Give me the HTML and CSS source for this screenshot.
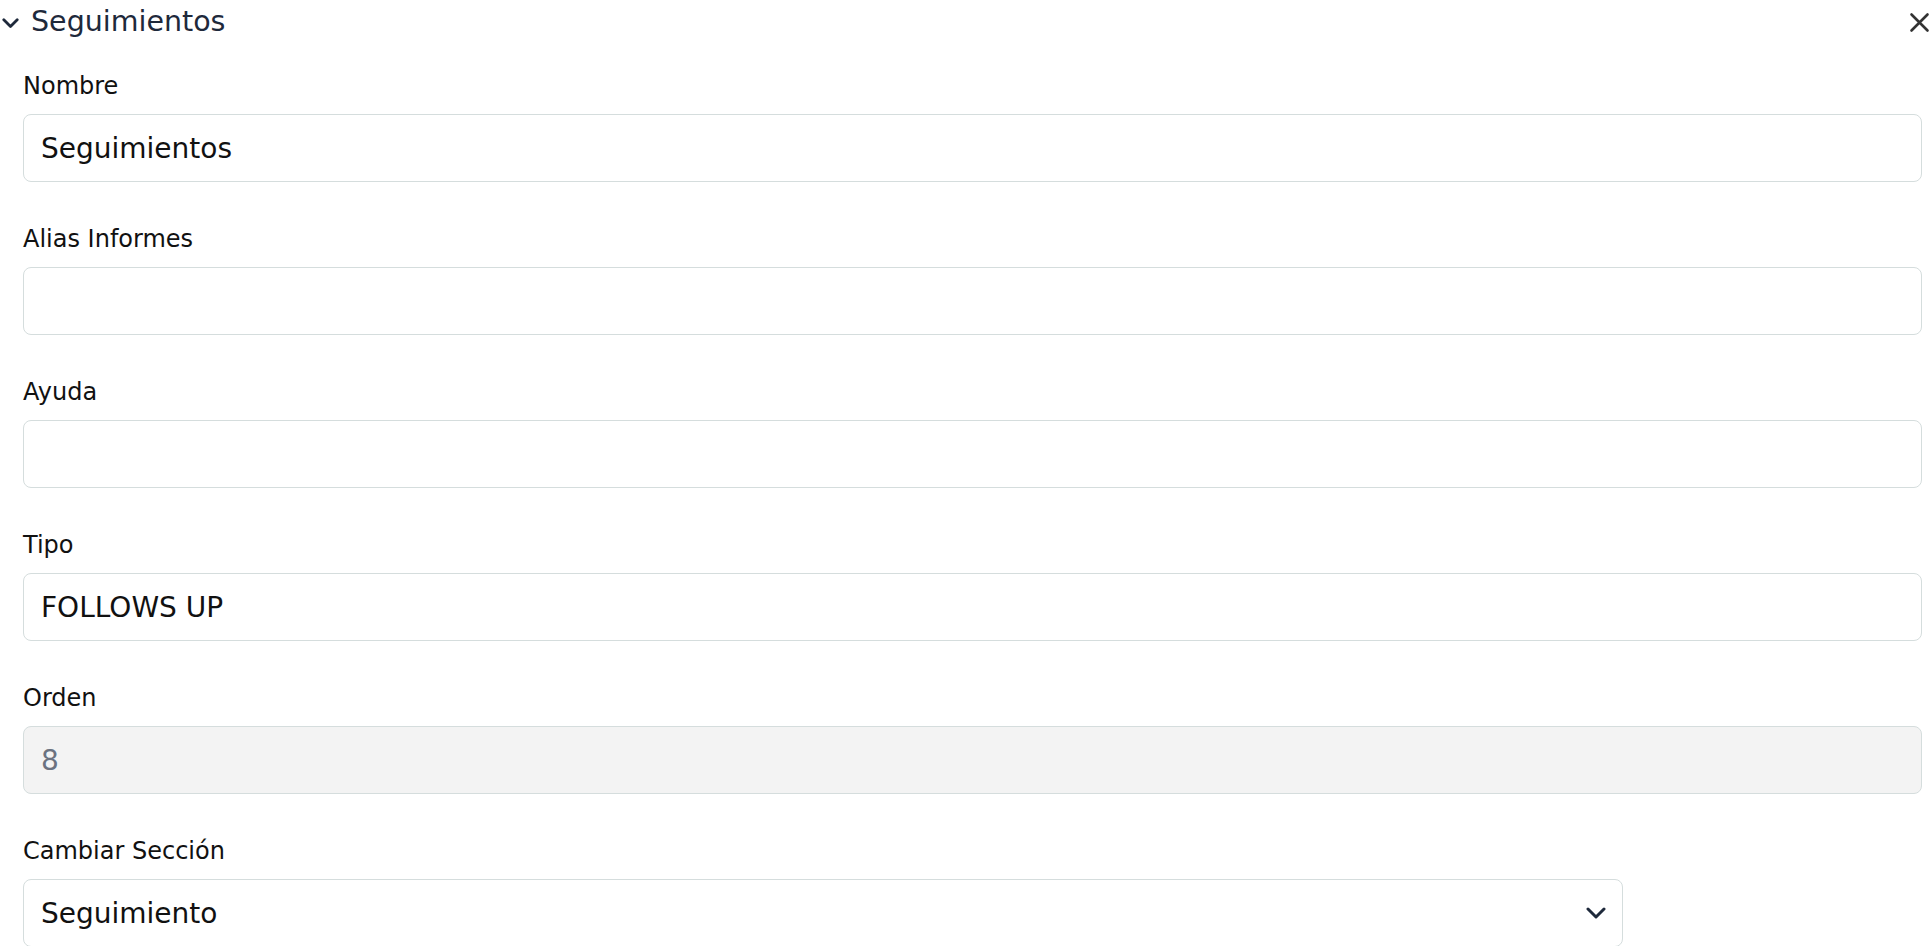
FILE: index.html
```html
<!DOCTYPE html>
<html lang="es">
<head>
<meta charset="utf-8">
<title>Seguimientos</title>
<link rel="stylesheet" href="styles.css">
</head>
<body>
<div class="panel">
  <div class="panel-header">
    <div class="title-wrap">
      <svg class="toggle" width="17" height="11" viewBox="0 0 17 11"><path d="M1.8 1.8 L8.5 8.5 L15.2 1.8" fill="none" stroke="#1e293b" stroke-width="2.8" stroke-linecap="round" stroke-linejoin="round"/></svg>
      <span class="title">Seguimientos</span>
    </div>
    <svg class="close" width="21" height="21" viewBox="0 0 21 21"><path d="M2.5 2.5 L18.5 18.5 M18.5 2.5 L2.5 18.5" fill="none" stroke="#333333" stroke-width="2.6" stroke-linecap="round"/></svg>
  </div>
  <form class="form">
    <div class="field">
      <label class="label">Nombre</label>
      <input class="input" type="text" value="Seguimientos">
    </div>
    <div class="field">
      <label class="label">Alias Informes</label>
      <input class="input" type="text" value="">
    </div>
    <div class="field">
      <label class="label">Ayuda</label>
      <input class="input" type="text" value="">
    </div>
    <div class="field">
      <label class="label">Tipo</label>
      <input class="input" type="text" value="FOLLOWS UP">
    </div>
    <div class="field">
      <label class="label">Orden</label>
      <input class="input disabled" type="text" value="8" disabled>
    </div>
    <div class="field">
      <label class="label">Cambiar Sección</label>
      <div class="select">
        <span class="select-value">Seguimiento</span>
        <svg class="select-arrow" width="20" height="12" viewBox="0 0 20 12"><path d="M2 2 L10 10 L18 2" fill="none" stroke="#1e293b" stroke-width="3" stroke-linecap="round" stroke-linejoin="round"/></svg>
      </div>
    </div>
  </form>
</div>
</body>
</html>
```

FILE: styles.css
```css
html, body {
  margin: 0;
  padding: 0;
  background: #ffffff;
}

body {
  font-family: "DejaVu Sans", "Inter", sans-serif;
  color: #111111;
}

.panel {
  width: 1930px;
}

.panel-header {
  height: 44px;
  display: flex;
  align-items: center;
  justify-content: space-between;
  padding: 0 0 0 2px;
  box-sizing: border-box;
}

.title-wrap {
  display: flex;
  align-items: center;
  gap: 12px;
}

.toggle {
  display: block;
  margin-top: 2px;
}

.title {
  font-size: 28.5px;
  font-weight: 400;
  color: #1e293b;
  line-height: 44px;
}

.close {
  display: block;
  margin-top: 1px;
}

.form {
  padding: 24px 8px 0 23px;
  display: flex;
  flex-direction: column;
}

.field {
  display: flex;
  flex-direction: column;
  margin-bottom: 39px;
}

.label {
  font-size: 24px;
  line-height: 32px;
  padding-top: 2px;
  margin-bottom: 12px;
  color: #111111;
}

.input {
  height: 68px;
  box-sizing: border-box;
  border: 1.5px solid #d5dddd;
  border-radius: 8px;
  padding: 0 17px;
  font-family: inherit;
  font-size: 28px;
  color: #111111;
  background: #ffffff;
  outline: none;
  width: 100%;
}

.input.disabled {
  background: #f3f3f3;
  color: #6b7280;
  -webkit-text-fill-color: #6b7280;
  opacity: 1;
}

.select {
  width: 84.25%;
  height: 68px;
  box-sizing: border-box;
  border: 1.5px solid #d5dddd;
  border-radius: 8px;
  padding: 0 16px 0 17px;
  display: flex;
  align-items: center;
  justify-content: space-between;
}

.select-value {
  font-size: 28px;
  color: #111111;
}

.select-arrow {
  display: block;
}
```
